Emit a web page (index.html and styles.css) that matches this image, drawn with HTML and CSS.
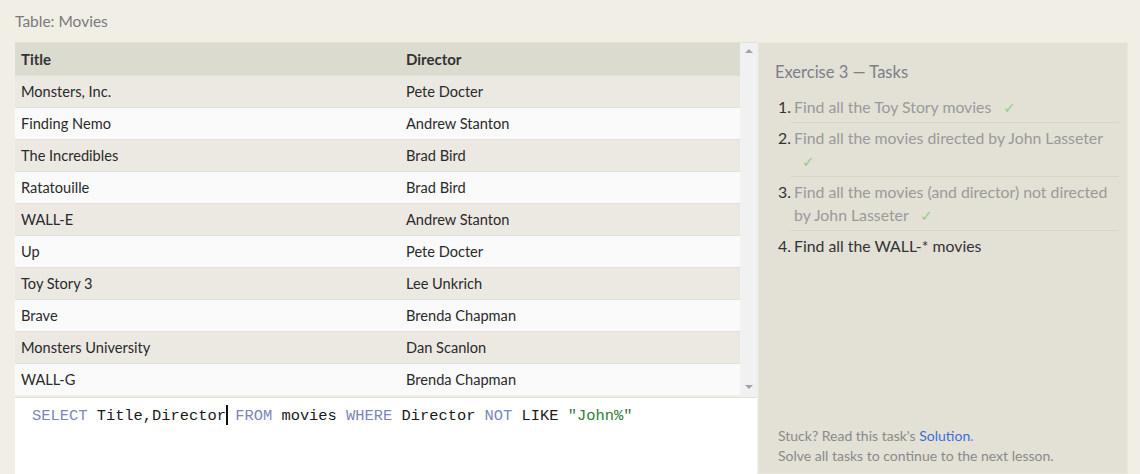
FILE: index.html
```html
<!DOCTYPE html>
<html>
<head>
<meta charset="utf-8">
<link rel="stylesheet" href="styles.css">
</head>
<body>
<div class="page">
  <div class="caption">Table: Movies</div>
  <div class="main">
    <div class="left">
      <div class="tablewrap">
        <div class="tablescroll">
          <table class="movies">
            <thead><tr><th class="c1">Title</th><th>Director</th></tr></thead>
            <tbody>
              <tr><td>Monsters, Inc.</td><td>Pete Docter</td></tr>
              <tr><td>Finding Nemo</td><td>Andrew Stanton</td></tr>
              <tr><td>The Incredibles</td><td>Brad Bird</td></tr>
              <tr><td>Ratatouille</td><td>Brad Bird</td></tr>
              <tr><td>WALL-E</td><td>Andrew Stanton</td></tr>
              <tr><td>Up</td><td>Pete Docter</td></tr>
              <tr><td>Toy Story 3</td><td>Lee Unkrich</td></tr>
              <tr><td>Brave</td><td>Brenda Chapman</td></tr>
              <tr><td>Monsters University</td><td>Dan Scanlon</td></tr>
              <tr><td>WALL-G</td><td>Brenda Chapman</td></tr>
            </tbody>
          </table>
        </div>
        <div class="scrollbar">
          <span class="arrow up"></span>
          <span class="arrow down"></span>
        </div>
      </div>
      <div class="editor">
        <div class="code"><span class="kw">SELECT</span> Title,Director<span class="cursor"></span> <span class="kw">FROM</span> movies <span class="kw">WHERE</span> Director <span class="kw">NOT</span> LIKE <span class="str">"John%"</span></div>
      </div>
    </div>
    <div class="tasks">
      <div class="tasks-title">Exercise 3 — Tasks</div>
      <ol class="tasklist">
        <li class="done"><span class="num">1.</span><span class="txt">Find all the Toy Story movies <span class="check">✓</span></span></li>
        <li class="done"><span class="num">2.</span><span class="txt">Find all the movies directed by John Lasseter <span class="check">✓</span></span></li>
        <li class="done"><span class="num">3.</span><span class="txt">Find all the movies (and director) not directed by John Lasseter <span class="check">✓</span></span></li>
        <li class="current"><span class="num">4.</span><span class="txt">Find all the WALL-* movies</span></li>
      </ol>
      <div class="footer">
        <div>Stuck? Read this task's <a class="link">Solution</a>.</div>
        <div>Solve all tasks to continue to the next lesson.</div>
      </div>
    </div>
  </div>
</div>
</body>
</html>
```
FILE: styles.css
```css
html, body {
  margin: 0;
  padding: 0;
  background: #f1eee6;
  font-family: "Segoe UI", Lato, "Open Sans", sans-serif;
  color: #333;
}
.page {
  width: 1140px;
  height: 474px;
  overflow: hidden;
}
.caption {
  padding: 11px 0 0 15px;
  height: 42px;
  box-sizing: border-box;
  font-size: 15.5px;
  line-height: 20px;
  color: #7a7a7a;
}
.main {
  display: flex;
  margin-left: 15px;
  height: 432px;
}
.left {
  width: 742px;
  display: flex;
  flex-direction: column;
}
.tablewrap {
  display: flex;
  height: 354px;
  border-top: 1px solid #e4e2d9;
}
.tablescroll {
  width: 725px;
  overflow: hidden;
}
.movies {
  width: 725px;
  border-collapse: collapse;
  font-size: 14.6px;
}
.movies th {
  background: #dcdbd0;
  text-align: left;
  font-weight: bold;
  font-size: 15px;
  height: 32px;
  padding: 0 6px;
  box-sizing: border-box;
  color: #333;
}
.movies th.c1 { width: 385px; }
.movies td {
  height: 32px;
  padding: 0 6px;
  box-sizing: border-box;
  border-top: 1px solid #e2e0d8;
  color: #2a2a2a;
}
.movies tbody tr:nth-child(odd) { background: #ebe9e2; }
.movies tbody tr:nth-child(even) { background: #fafafa; }
.scrollbar {
  width: 17px;
  background: #f1f1f1;
  display: flex;
  flex-direction: column;
  justify-content: space-between;
  align-items: center;
  padding: 6px 0 8px;
  box-sizing: border-box;
}
.arrow {
  width: 0;
  height: 0;
  border-left: 4px solid transparent;
  border-right: 4px solid transparent;
}
.arrow.up { border-bottom: 4px solid #a3a3a3; }
.arrow.down { border-top: 4px solid #a3a3a3; }
.editor {
  flex: 1;
  background: #fff;
  border-top: 1px solid #e3e1d8;
  padding: 7px 0 0 17px;
}
.code {
  font-family: "Liberation Mono", "DejaVu Sans Mono", monospace;
  font-size: 15.4px;
  color: #1a1a1a;
  line-height: 22px;
  white-space: pre;
}
.kw { color: #7c86b8; }
.str { color: #2f7d32; }
.cursor {
  display: inline-block;
  width: 2px;
  height: 20px;
  background: #111;
  vertical-align: -5px;
  margin-right: -2px;
}
.tasks {
  width: 370px;
  margin-left: 1px;
  background: #e3e0d5;
  border: 1px solid #e9e7de;
  box-sizing: border-box;
  padding: 18px 8px 0 16px;
  display: flex;
  flex-direction: column;
}
.tasks-title {
  font-size: 16.5px;
  color: #7b7f88;
  line-height: 22px;
}
.tasklist {
  list-style: none;
  margin: 9px 0 0 0;
  padding: 0;
  font-size: 15.8px;
  line-height: 23px;
}
.tasklist li {
  display: flex;
}
.tasklist .num {
  width: 16px;
  flex: none;
  text-align: right;
  color: #333;
  padding-top: 3px;
}
.tasklist .txt {
  padding: 3px 0 4px 3px;
  flex: 1;
  border-bottom: 1px solid #d6d3c8;
}
.tasklist li.current .txt { border-bottom: none; color: #333; }
.tasklist li.done .txt { color: #9a9a9a; }
.check {
  font-family: "DejaVu Sans", sans-serif;
  font-size: 15px;
  line-height: 1;
  color: #8fcf8f;
  margin-left: 8px;
}
.footer {
  margin-top: auto;
  padding: 0 0 7px 3px;
  font-size: 14px;
  line-height: 20px;
  color: #8a8a8a;
}
.link { color: #3b6fd8; }
```
